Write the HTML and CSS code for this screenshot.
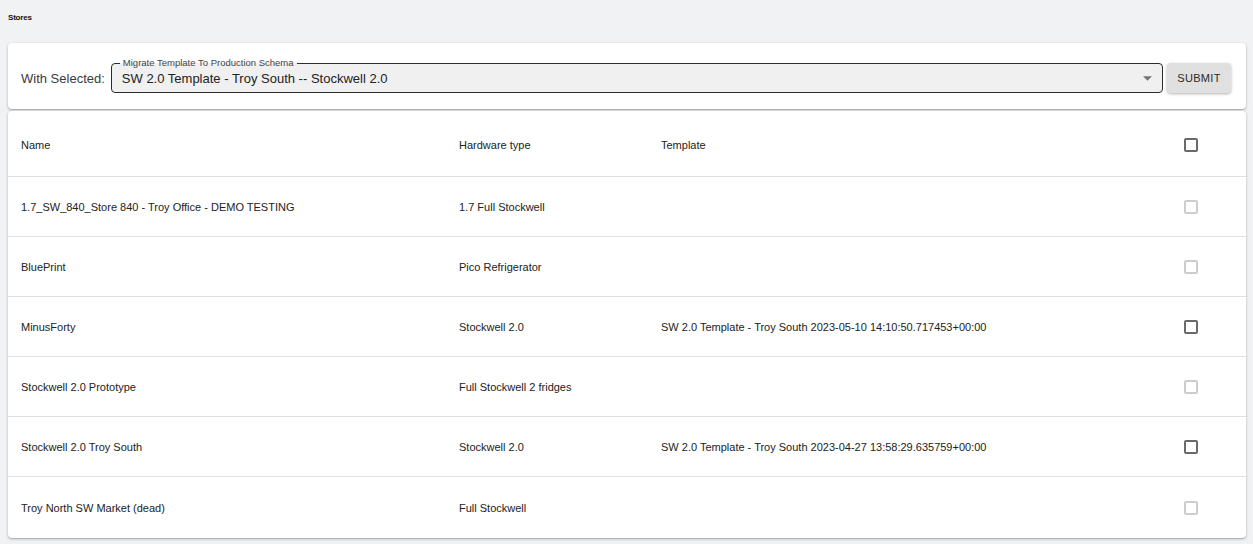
FILE: index.html
```html
<!DOCTYPE html>
<html>
<head>
<meta charset="utf-8">
<link rel="stylesheet" href="styles.css">
</head>
<body>
<div class="page">
  <div class="title">Stores</div>
  <div class="card toolbar">
    <span class="with">With Selected:</span>
    <div class="select">
      <span class="select-label">Migrate Template To Production Schema</span>
      <span class="select-value">SW 2.0 Template - Troy South -- Stockwell 2.0</span>
      <svg class="arrow" width="9" height="5" viewBox="0 0 10 5"><path d="M0 0h10L5 5z" fill="#757575"/></svg>
    </div>
    <button class="submit">SUBMIT</button>
  </div>
  <div class="card table">
    <div class="row head">
      <div class="cell">Name</div>
      <div class="cell">Hardware type</div>
      <div class="cell">Template</div>
      <div class="cell check"><span class="box"></span></div>
    </div>
    <div class="row">
      <div class="cell">1.7_SW_840_Store 840 - Troy Office - DEMO TESTING</div>
      <div class="cell">1.7 Full Stockwell</div>
      <div class="cell"></div>
      <div class="cell check"><span class="box disabled"></span></div>
    </div>
    <div class="row">
      <div class="cell">BluePrint</div>
      <div class="cell">Pico Refrigerator</div>
      <div class="cell"></div>
      <div class="cell check"><span class="box disabled"></span></div>
    </div>
    <div class="row">
      <div class="cell">MinusForty</div>
      <div class="cell">Stockwell 2.0</div>
      <div class="cell">SW 2.0 Template - Troy South 2023-05-10 14:10:50.717453+00:00</div>
      <div class="cell check"><span class="box"></span></div>
    </div>
    <div class="row">
      <div class="cell">Stockwell 2.0 Prototype</div>
      <div class="cell">Full Stockwell 2 fridges</div>
      <div class="cell"></div>
      <div class="cell check"><span class="box disabled"></span></div>
    </div>
    <div class="row">
      <div class="cell">Stockwell 2.0 Troy South</div>
      <div class="cell">Stockwell 2.0</div>
      <div class="cell">SW 2.0 Template - Troy South 2023-04-27 13:58:29.635759+00:00</div>
      <div class="cell check"><span class="box"></span></div>
    </div>
    <div class="row last">
      <div class="cell">Troy North SW Market (dead)</div>
      <div class="cell">Full Stockwell</div>
      <div class="cell"></div>
      <div class="cell check"><span class="box disabled"></span></div>
    </div>
  </div>
</div>
</body>
</html>
```

FILE: styles.css
```css
html, body {
  margin: 0;
  padding: 0;
  background: #f1f2f4;
  font-family: "Liberation Sans", Arial, sans-serif;
  color: #222;
}
.page {
  padding: 8px 7px 8px 8px;
}
.title {
  font-size: 8px;
  font-weight: bold;
  letter-spacing: -0.2px;
  height: 19px;
  line-height: 20px;
  margin-bottom: 16px;
  color: #111;
}
.card {
  background: #fff;
  border-radius: 4px;
  box-shadow: 0 1px 3px rgba(0,0,0,0.25), 0 1px 1px rgba(0,0,0,0.12);
}
.toolbar {
  display: flex;
  align-items: center;
  padding: 20px 15px 16px 13px;
  height: 30px;
  gap: 4px;
}
.with {
  font-size: 13px;
  color: #3b3b3b;
  margin-right: 2px;
}
.select {
  position: relative;
  flex: 1;
  height: 28px;
  border: 1px solid #2c2c2c;
  border-radius: 4px;
  background: #f0f0f0;
  display: flex;
  align-items: center;
  padding: 0 10px 0 10px;
}
.select-label {
  position: absolute;
  left: 8px;
  top: -7px;
  font-size: 9.5px;
  line-height: 12px;
  color: #444;
  padding: 0 3px;
  background: linear-gradient(#fff 0 50%, #f0f0f0 50% 100%);
}
.select-value {
  flex: 1;
  font-size: 13px;
  color: #222;
}
.submit {
  width: 64px;
  height: 30px;
  border: none;
  border-radius: 4px;
  background: #e0e0e0;
  box-shadow: 0 1px 3px rgba(0,0,0,0.3);
  font-family: "Liberation Sans", Arial, sans-serif;
  font-size: 11px;
  font-weight: 500;
  letter-spacing: 0.3px;
  color: #2a2a2a;
  padding: 0;
}
.table {
  margin-top: 2px;
}
.row {
  display: grid;
  grid-template-columns: 438px 202px 1fr 110px;
  height: 59px;
  border-bottom: 1px solid #e0e0e0;
  align-items: center;
  font-size: 11px;
}
.row.head {
  height: 63px;
  padding-top: 2px;
}
.row.last {
  border-bottom: none;
  height: 61px;
}
.cell {
  padding-left: 13px;
  color: #222;
}
.cell.check {
  padding: 0;
  display: flex;
  justify-content: center;
}
.box {
  width: 10px;
  height: 10px;
  border: 2px solid #6a6a6a;
  border-radius: 2px;
  display: block;
}
.box.disabled {
  border-color: #cdcdcd;
}
```
